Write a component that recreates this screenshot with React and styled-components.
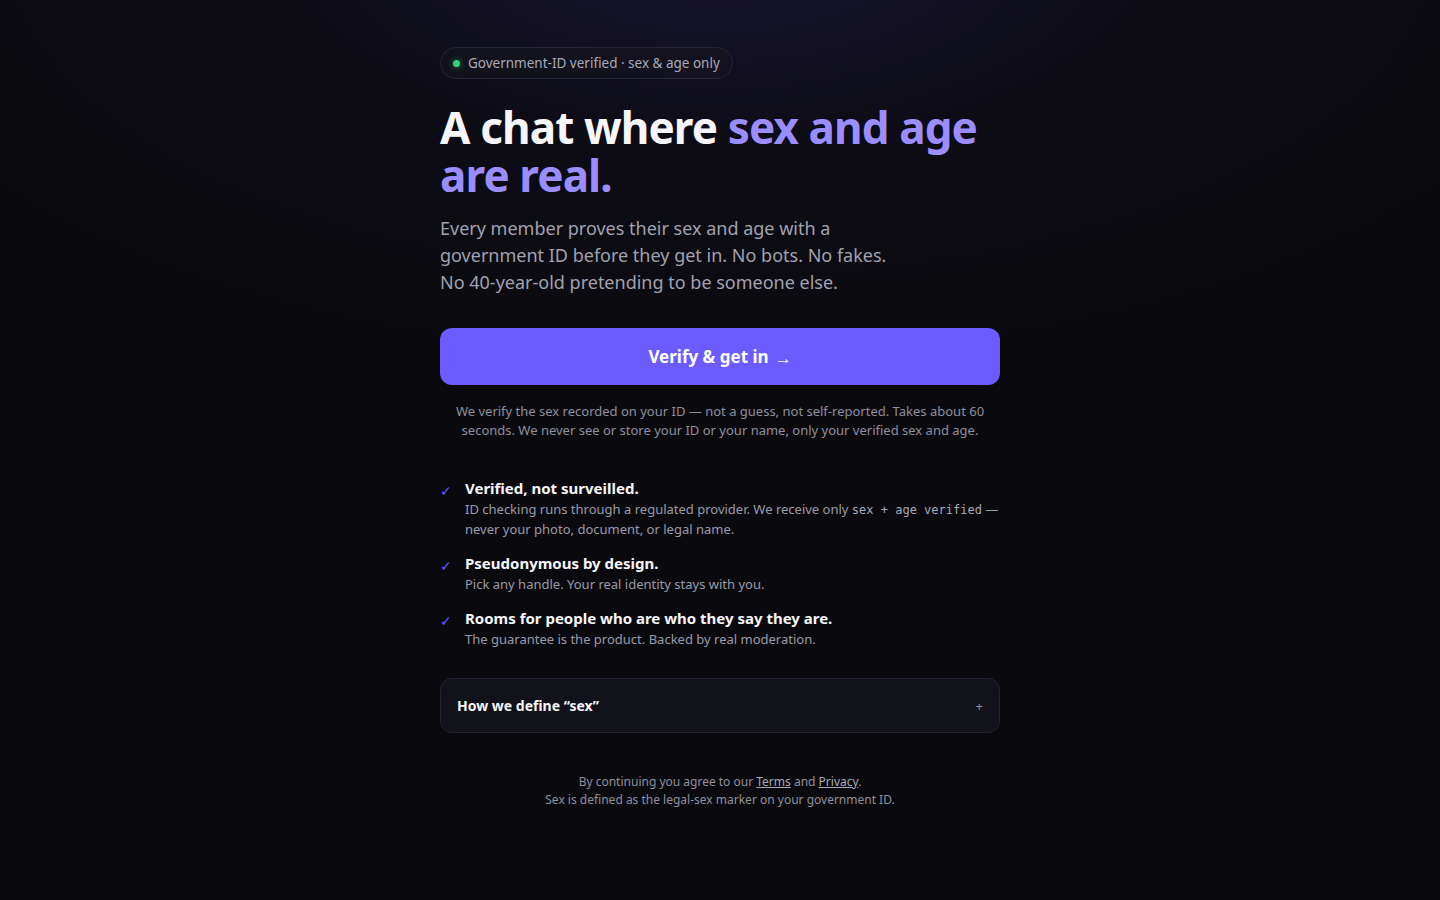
import React from "react";
import styled, { createGlobalStyle } from "styled-components";

const Global = createGlobalStyle`
  html, body { margin: 0; padding: 0; }
  body {
    background: #0a0a0e;
    font-family: "Noto Sans", "Open Sans", sans-serif;
    color: #f4f4f8;
    min-height: 100vh;
  }
`;

const Page = styled.div`
  min-height: 900px;
  background:
    radial-gradient(ellipse 900px 420px at 50% -60px, rgba(60, 50, 140, 0.28), rgba(30, 26, 70, 0.12) 50%, rgba(10, 10, 14, 0) 100%),
    #0a0a0e;
  display: flex;
  justify-content: center;
`;

const Column = styled.main`
  width: 560px;
  padding-top: 47px;
  display: flex;
  flex-direction: column;
`;

const Pill = styled.div`
  align-self: flex-start;
  display: inline-flex;
  align-items: center;
  gap: 8px;
  height: 30px;
  padding: 0 12px 0 12px;
  border: 1px solid #25253a;
  border-radius: 16px;
  background: rgba(20, 20, 30, 0.7);
  font-size: 13.5px;
  color: #a9a9b8;
`;

const Dot = styled.span`
  width: 7px;
  height: 7px;
  border-radius: 50%;
  background: #34d376;
  box-shadow: 0 0 6px rgba(52, 211, 118, 0.6);
`;

const Title = styled.h1`
  margin: 24px 0 0;
  font-size: 44px;
  line-height: 48px;
  font-weight: 700;
  letter-spacing: -0.88px;
  color: #f6f6fa;
`;

const Accent = styled.span`
  color: #9b8cff;
`;

const Lead = styled.p`
  margin: 16px 0 0;
  max-width: 460px;
  font-size: 18px;
  line-height: 27px;
  color: #a1a1b0;
`;

const Cta = styled.button`
  margin-top: 32px;
  height: 57px;
  width: 100%;
  border: none;
  border-radius: 12px;
  background: #6c5cff;
  color: #fff;
  font-family: inherit;
  font-size: 17px;
  font-weight: 700;
  cursor: pointer;
  display: flex;
  align-items: center;
  justify-content: center;
  gap: 6px;
`;

const Arrow = styled.span`
  font-size: 17px;
  font-weight: 400;
  margin-top: 1px;
`;

const Note = styled.p`
  margin: 17px 0 0;
  text-align: center;
  font-size: 13px;
  line-height: 19px;
  color: #8f8f9e;
`;

const Features = styled.ul`
  list-style: none;
  margin: 38px 0 0;
  padding: 0;
  display: flex;
  flex-direction: column;
  gap: 14px;
`;

const Feature = styled.li`
  display: grid;
  grid-template-columns: 25px 1fr;
  align-items: start;
`;

const Check = styled.span`
  color: #6c5cff;
  font-size: 14px;
  line-height: 21px;
  padding-top: 2px;
`;

const FeatureTitle = styled.div`
  font-size: 15px;
  line-height: 21px;
  font-weight: 700;
  color: #f6f6fa;
`;

const FeatureText = styled.div`
  font-size: 13px;
  line-height: 20px;
  color: #9a9aa9;
`;

const Code = styled.code`
  font-family: "DejaVu Sans Mono", "Liberation Mono", monospace;
  font-size: 12px;
  line-height: 1;
  color: #a9a9b8;
`;

const Accordion = styled.button`
  margin-top: 29px;
  width: 100%;
  height: 55px;
  border: 1px solid #23232f;
  border-radius: 12px;
  background: #12121a;
  color: #f6f6fa;
  font-family: inherit;
  font-size: 14px;
  font-weight: 700;
  display: flex;
  align-items: center;
  justify-content: space-between;
  padding: 0 16px 0 16px;
  cursor: pointer;
`;

const Plus = styled.span`
  font-size: 13px;
  font-weight: 400;
  color: #8f8f9e;
`;

const Footer = styled.footer`
  margin-top: 40px;
  text-align: center;
  font-size: 12px;
  line-height: 18px;
  color: #8f8f9e;
`;

const FootLink = styled.a`
  color: #a9a9b8;
  text-decoration: underline;
`;

const features = [
  {
    title: "Verified, not surveilled.",
    text: (
      <>
        ID checking runs through a regulated provider. We receive only <Code>sex + age verified</Code> — never your photo, document, or legal name.
      </>
    ),
  },
  { title: "Pseudonymous by design.", text: "Pick any handle. Your real identity stays with you." },
  { title: "Rooms for people who are who they say they are.", text: "The guarantee is the product. Backed by real moderation." },
];

export default function App() {
  return (
    <>
      <Global />
      <Page>
        <Column>
          <Pill>
            <Dot />
            Government-ID verified · sex &amp; age only
          </Pill>
          <Title>
            A chat where <Accent>sex and age are real.</Accent>
          </Title>
          <Lead>
            Every member proves their sex and age with a government ID before they get in. No bots. No fakes. No 40-year-old pretending to be someone else.
          </Lead>
          <Cta>
            Verify &amp; get in <Arrow>→</Arrow>
          </Cta>
          <Note>
            We verify the sex recorded on your ID — not a guess, not self-reported. Takes about 60 seconds. We never see or store your ID or your name, only your verified sex and age.
          </Note>
          <Features>
            {features.map((f) => (
              <Feature key={f.title}>
                <Check>✓</Check>
                <div>
                  <FeatureTitle>{f.title}</FeatureTitle>
                  <FeatureText>{f.text}</FeatureText>
                </div>
              </Feature>
            ))}
          </Features>
          <Accordion>
            How we define “sex”
            <Plus>+</Plus>
          </Accordion>
          <Footer>
            By continuing you agree to our <FootLink href="#">Terms</FootLink> and <FootLink href="#">Privacy</FootLink>.
            <br />
            Sex is defined as the legal-sex marker on your government ID.
          </Footer>
        </Column>
      </Page>
    </>
  );
}
